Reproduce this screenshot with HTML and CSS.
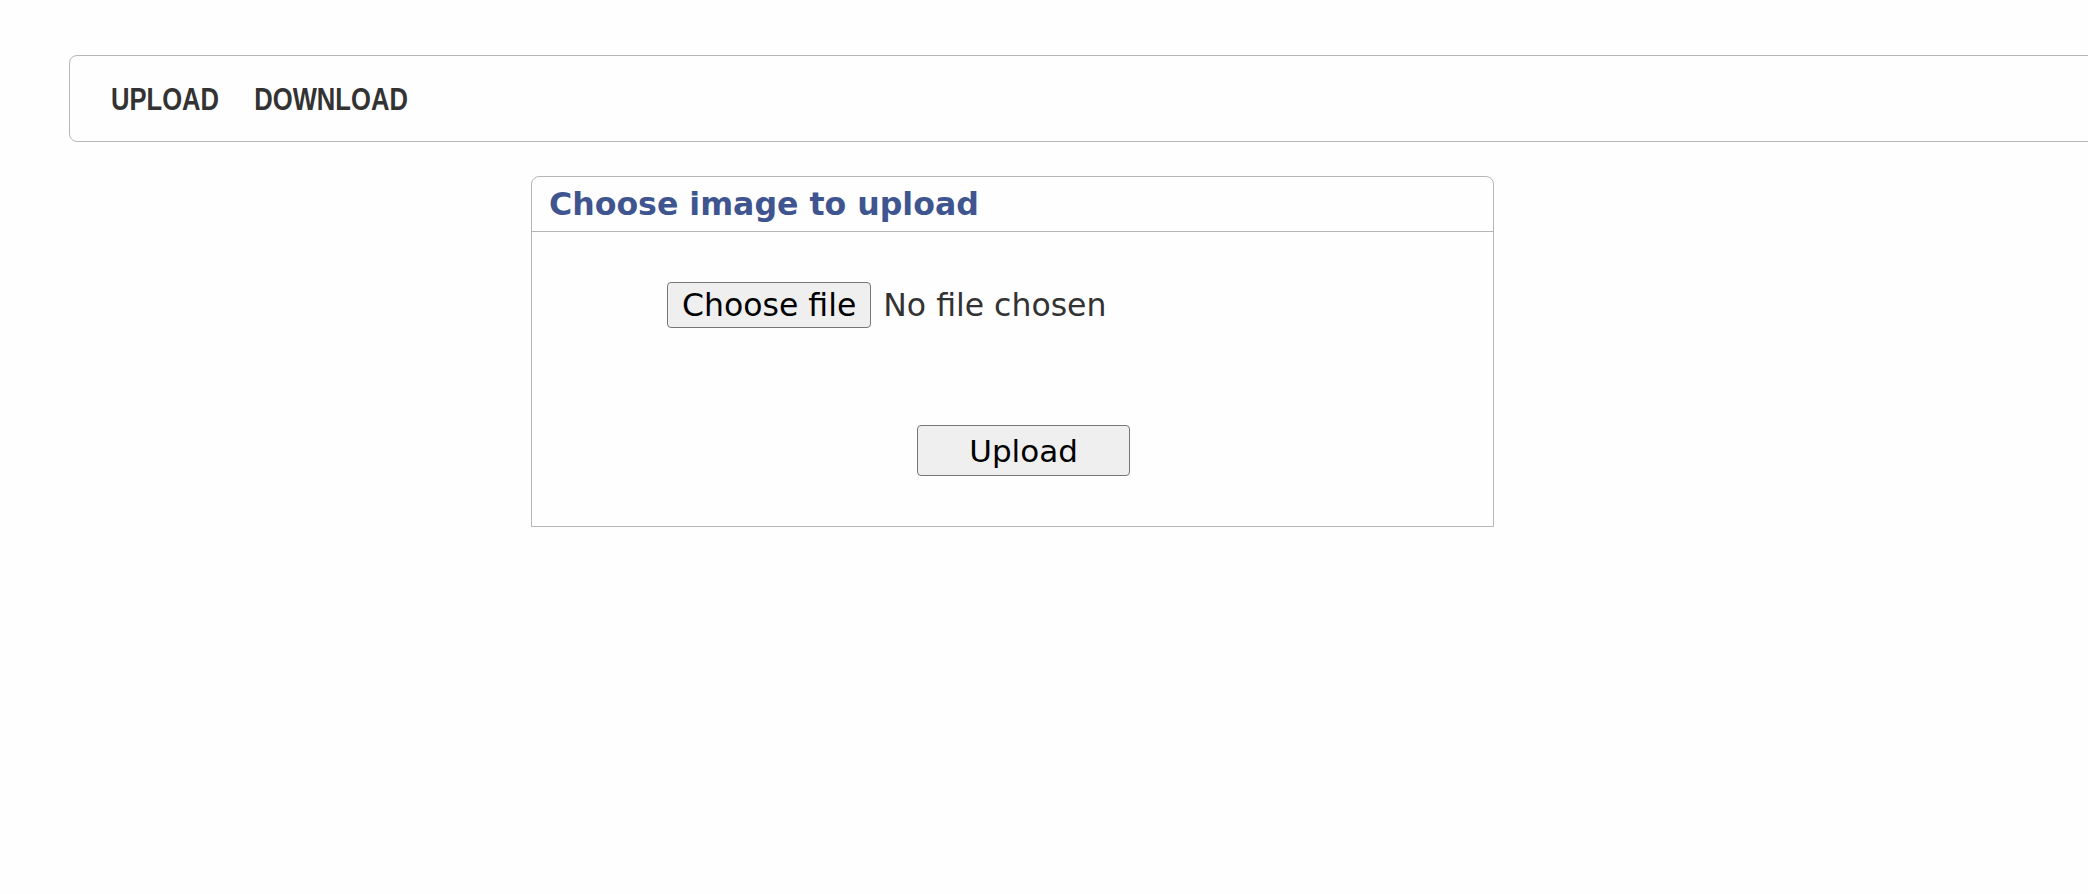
FILE: index.html
```html
<!DOCTYPE html>
<html lang="en">
<head>
<meta charset="utf-8">
<title>Upload</title>
<link rel="stylesheet" href="styles.css">
</head>
<body>
<nav class="navbar">
  <div class="nav-links">
    <a class="nav-link" href="#">UPLOAD</a>
    <a class="nav-link" href="#">DOWNLOAD</a>
  </div>
</nav>
<section class="panel">
  <div class="panel-header">Choose image to upload</div>
  <div class="panel-body">
    <div class="file-row">
      <button class="btn file-btn" type="button">Choose file</button>
      <span class="file-status">No file chosen</span>
    </div>
    <div class="submit-row">
      <button class="btn upload-btn" type="button">Upload</button>
    </div>
  </div>
</section>
</body>
</html>
```
FILE: styles.css
```css
html, body {
  margin: 0;
  padding: 0;
  background: #fefefe;
  overflow: hidden;
}

body {
  font-family: "DejaVu Sans", Verdana, sans-serif;
}

.navbar {
  margin: 55px 0 0 69px;
  width: 2100px;
  height: 85px;
  border: 1px solid #b6b6b6;
  border-radius: 8px;
  display: flex;
  align-items: center;
  padding-left: 41px;
  box-sizing: content-box;
}

.nav-links {
  display: flex;
  gap: 44px;
  transform: scaleX(0.8);
  transform-origin: left center;
}

.nav-link {
  font-family: "Liberation Sans", Arial, sans-serif;
  font-weight: bold;
  font-size: 32px;
  color: #333333;
  text-decoration: none;
  line-height: 1;
}

.panel {
  margin: 34px 0 0 531px;
  width: 961px;
  border: 1px solid #b6b6b6;
  border-radius: 8px 8px 0 0;
}

.panel-header {
  padding: 9px 17px;
  font-weight: bold;
  font-size: 31.6px;
  line-height: 36px;
  color: #3f5590;
  border-bottom: 1px solid #b6b6b6;
}

.panel-body {
  display: flex;
  flex-direction: column;
  padding: 50px 0 50px;
}

.file-row {
  display: flex;
  align-items: center;
  gap: 12px;
  padding-left: 135px;
}

.btn {
  font-family: "DejaVu Sans", Verdana, sans-serif;
  font-size: 31.5px;
  line-height: 36px;
  color: #000;
  background: #efefef;
  border: 1px solid #767676;
  border-radius: 4px;
  margin: 0;
}

.file-btn {
  padding: 4px 14px;
}

.file-status {
  font-size: 31.5px;
  line-height: 36px;
  color: #333333;
}

.submit-row {
  margin-top: 97px;
  padding-left: 385px;
}

.upload-btn {
  width: 213px;
  height: 51px;
  padding: 0;
  font-size: 31px;
}
```
